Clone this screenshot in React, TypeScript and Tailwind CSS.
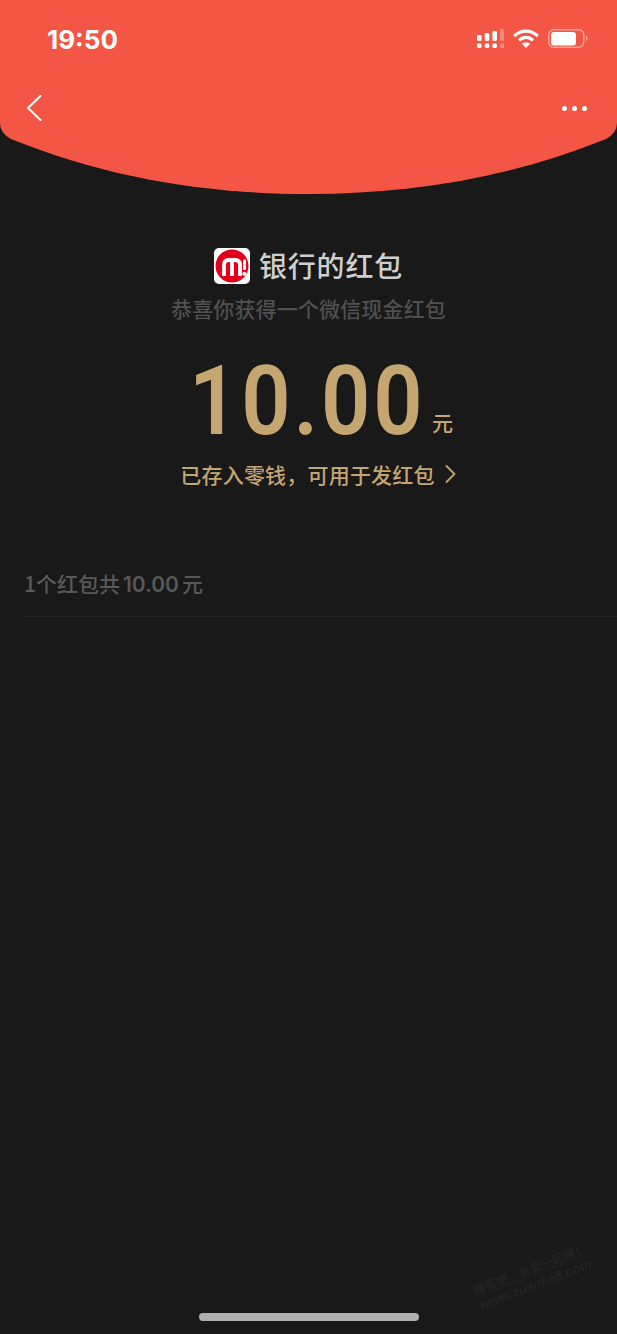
import React from "react";

const CJK = '"Noto Sans CJK SC", sans-serif';

function Signal() {
  const cols = [
    { x: 0, top: 6 },
    { x: 7.7, top: 4 },
    { x: 15.4, top: 2 },
  ];
  return (
    <svg width="27" height="19" viewBox="0 0 27 19" fill="#fff">
      {cols.map((c) => (
        <g key={c.x}>
          <rect x={c.x} y={c.top} width="4.6" height={12 - c.top} rx="1.4" />
          <rect x={c.x} y="14.5" width="4.6" height="4.5" rx="1.4" />
        </g>
      ))}
      <rect x="23" y="0" width="4.2" height="12" rx="1" opacity="0.3" />
      <rect x="23" y="14.5" width="4.2" height="4.5" rx="1" opacity="0.3" />
    </svg>
  );
}

function Wifi() {
  return (
    <svg width="26" height="19" viewBox="0 0 26 19" fill="none" stroke="#fff" strokeWidth="3.2">
      <path d="M1.2 7.2 C7.5 0.4 18.5 0.4 24.8 7.2" />
      <path d="M6 11.4 C10 7.4 16 7.4 20 11.4" />
      <path d="M13 19 L8.8 14.8 C11.2 12.9 14.8 12.9 17.2 14.8 Z" fill="#fff" stroke="none" />
    </svg>
  );
}

function Battery() {
  return (
    <svg width="40" height="19" viewBox="0 0 40 19" fill="none">
      <rect x="0.75" y="0.75" width="35" height="17.5" rx="5" stroke="#fff" strokeOpacity="0.45" strokeWidth="1.5" />
      <rect x="3" y="3" width="25" height="13.5" rx="3" fill="#fff" />
      <path d="M38 6.5 C40 7.5 40 11.5 38 12.5 Z" fill="#fff" fillOpacity="0.5" />
    </svg>
  );
}

function Logo() {
  return (
    <svg width="36" height="36" viewBox="0 0 36 36" className="shrink-0">
      <rect width="36" height="36" rx="5" fill="#fff" />
      <circle cx="18" cy="18" r="16.5" fill="#e2001a" />
      <path d="M10 28 V17 Q10 12 15 12 H21 Q26 12 26 17 V28 M18 13 V28" fill="none" stroke="#fff" strokeWidth="3.8" />
      <rect x="29" y="11.5" width="3" height="10.5" rx="1" fill="#fff" />
      <circle cx="30.4" cy="25.8" r="2" fill="#fff" />
    </svg>
  );
}

export default function App() {
  return (
    <div className="relative h-[1334px] w-full overflow-hidden bg-[#191919]" style={{ fontFamily: CJK }}>
      <header className="relative h-[194px]">
        <svg className="absolute inset-0" width="617" height="194" viewBox="0 0 617 194">
          <path
            d="M0 0 H617 V123 Q617 133 606 139 C 510 178 410 194 308.5 194 C 207 194 107 178 11 139 Q0 133 0 123 Z"
            fill="#f35644"
          />
        </svg>
        <div className="relative flex h-[78px] items-start justify-between pt-[25px] pl-[47px] pr-[29px]">
          <span className="text-[26px] font-bold leading-[30px] text-white" style={{ fontFamily: "Inter, sans-serif" }}>
            19:50
          </span>
          <div className="flex items-center gap-[9px] pt-[4px]">
            <Signal />
            <Wifi />
            <Battery />
          </div>
        </div>
        <div className="relative flex items-center justify-between pl-[26px] pr-[30px] pt-[17px]">
          <svg width="16" height="26" viewBox="0 0 16 26" fill="none" stroke="#fff" strokeWidth="2" strokeLinecap="round">
            <path d="M14.5 1 L2 13 L14.5 25" />
          </svg>
          <div className="flex gap-[5px]">
            <span className="h-[5px] w-[5px] rounded-full bg-white" />
            <span className="h-[5px] w-[5px] rounded-full bg-white" />
            <span className="h-[5px] w-[5px] rounded-full bg-white" />
          </div>
        </div>
      </header>

      <main className="flex flex-col items-center pt-[53px]">
        <div className="flex h-[38px] items-center gap-[9px]">
          <Logo />
          <span className="pb-[2px] text-[28px] font-medium leading-[36px] tracking-[0.8px] text-[#cfcfcf]">银行的红包</span>
        </div>
        <p className="mt-[8px] text-[21px] font-medium leading-[30px] tracking-[0.15px] text-[#505050]">恭喜你获得一个微信现金红包</p>
        <div className="mt-[24px] flex h-[108px] items-end pl-[22px]">
          <div className="w-[238px] pl-[3px]">
            <span
              className="inline-block origin-left scale-x-[0.9] text-[96px] font-semibold leading-[108px] tracking-[3.2px] whitespace-nowrap text-[#c5a570]"
              style={{ fontFamily: "Roboto, sans-serif" }}
            >
              10.00
            </span>
          </div>
          <span className="mb-[21px] ml-[8px] text-[21px] font-medium leading-[24px] text-[#c5a570]">元</span>
        </div>
        <div className="mt-[4px] flex items-center gap-[10px] pl-[19px]">
          <span className="text-[21px] font-medium leading-[30px] tracking-[0.2px] text-[#c5a570]">已存入零钱，可用于发红包</span>
          <svg width="11" height="20" viewBox="0 0 11 20" fill="none" stroke="#c5a570" strokeWidth="1.8" strokeLinecap="round">
            <path d="M1.5 2 L9.5 10 L1.5 18" />
          </svg>
        </div>
      </main>

      <section className="ml-[24px] mt-[79px] border-b border-[#232323] pb-[16px]">
        <p className="text-[21px] font-medium leading-[30px] text-[#585858]">
          1个红包共<span className="mx-[3px] font-semibold" style={{ fontFamily: "Inter, sans-serif" }}>10.00</span>元
        </p>
      </section>

      <div className="absolute bottom-[13px] left-[199px] h-[8px] w-[220px] rounded-full bg-[#b0b0b0]" />

      <div className="absolute left-[471px] top-[1283px] w-[122px] origin-top-left -rotate-[21deg] text-[#232323]">
        <div className="border-b border-[#212121] text-[12px] font-bold leading-[15px] whitespace-nowrap">赚客吧，有奖一起赚！</div>
        <div className="pt-[1px] text-[13.5px] font-bold italic leading-[15px] whitespace-nowrap" style={{ fontFamily: '"Liberation Sans", sans-serif' }}>
          www.zuanke8.com
        </div>
      </div>
    </div>
  );
}
